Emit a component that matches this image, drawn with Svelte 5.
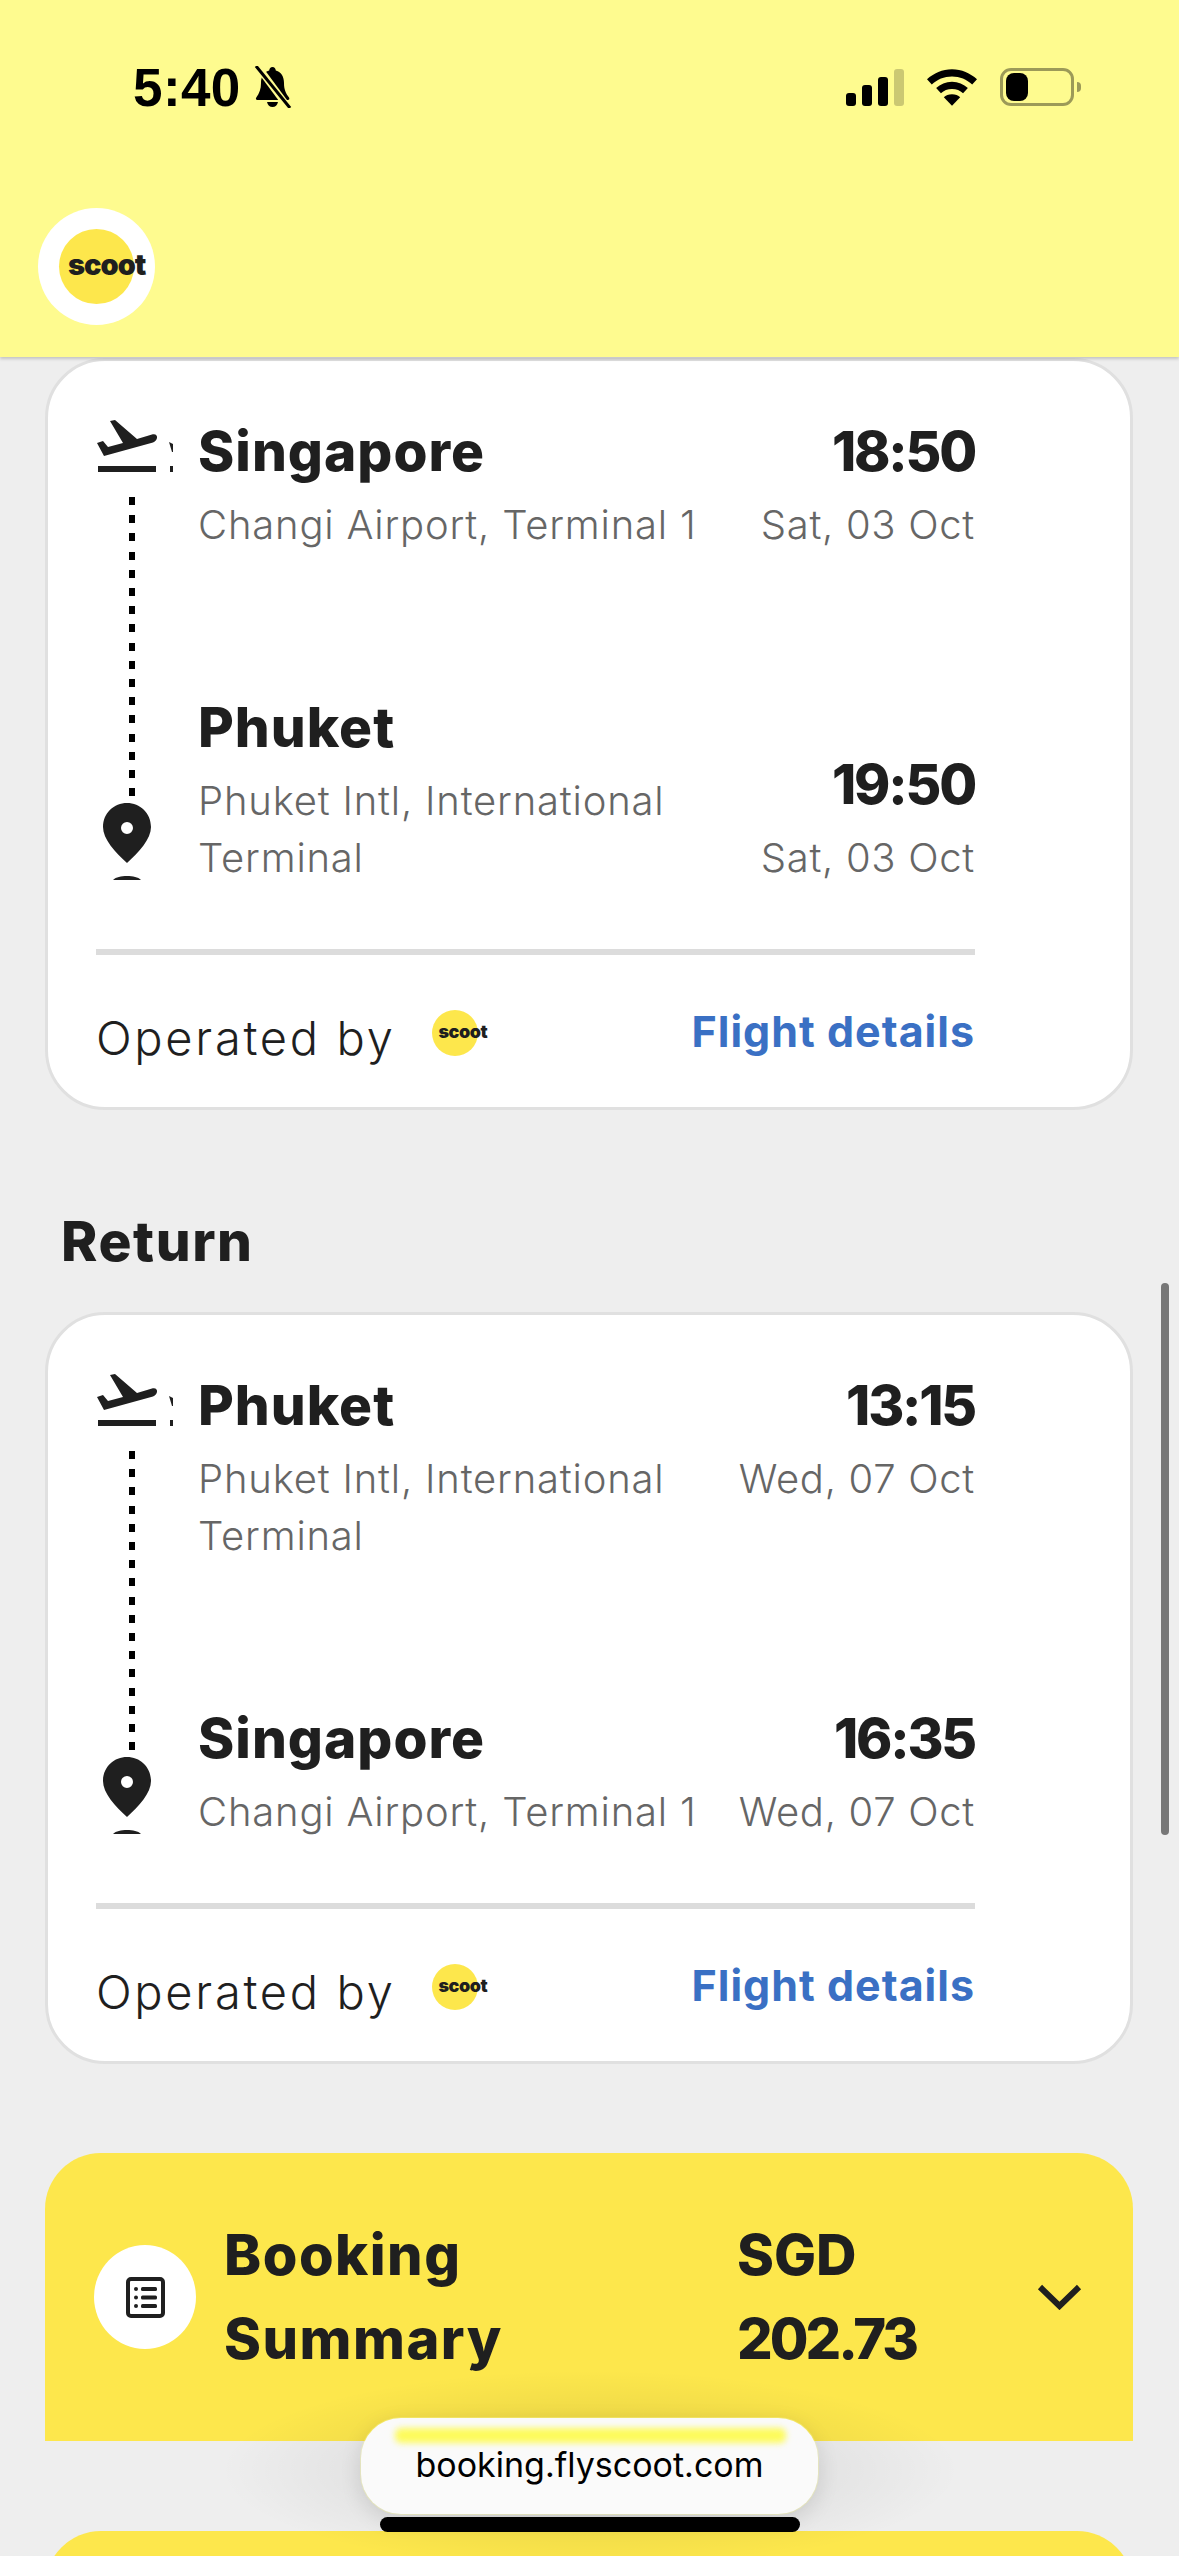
<script lang="ts">
  interface Stop {
    city: string;
    airport: string;
    time: string;
    date: string;
  }

  interface Leg {
    title?: string;
    from: Stop;
    to: Stop;
  }

  const legs: Leg[] = [
    {
      from: { city: "Singapore", airport: "Changi Airport, Terminal 1", time: "18:50", date: "Sat, 03 Oct" },
      to: { city: "Phuket", airport: "Phuket Intl, International Terminal", time: "19:50", date: "Sat, 03 Oct" },
    },
    {
      title: "Return",
      from: { city: "Phuket", airport: "Phuket Intl, International Terminal", time: "13:15", date: "Wed, 07 Oct" },
      to: { city: "Singapore", airport: "Changi Airport, Terminal 1", time: "16:35", date: "Wed, 07 Oct" },
    },
  ];
</script>

<div class="page">
  <header class="topbar">
    <div class="status">
      <div class="clock">
        <span>5:40</span>
        <svg class="bell" viewBox="0 0 39 42" aria-hidden="true">
          <path d="M19.500 1c2 0 3 1.500 3.300 3.500C28.500 6 31 11 31 17c0 6 1.500 10 5 14.500.8 1.200.2 2.500-1.200 2.500H4.500c-1.500 0-2.100-1.300-1.200-2.500C6.500 27 8 23 8 17c0-6 2.500-11 8.200-12.500C16.500 2.500 17.500 1 19.500 1z" fill="#000" />
          <path d="M14 36h11c-.5 3-2.800 5-5.500 5s-5-2-5.500-5z" fill="#000" />
          <path d="M3 -2l34 46" stroke="#fefb8f" stroke-width="7" />
          <path d="M3 0l34 42" stroke="#000" stroke-width="3" />
        </svg>
      </div>
      <div class="indicators">
        <svg class="signal" viewBox="0 0 58 37" aria-hidden="true">
          <rect x="0" y="24" width="10" height="13" rx="3" fill="#000" />
          <rect x="16" y="16" width="10" height="21" rx="3" fill="#000" />
          <rect x="32" y="8" width="10" height="29" rx="3" fill="#000" />
          <rect x="48" y="0" width="10" height="37" rx="3" fill="#000" opacity="0.2" />
        </svg>
        <svg class="wifi" viewBox="0 0 52 38" aria-hidden="true">
          <path d="M26 0C16 0 7 4 0 10.500l5 5.500C10.500 10.500 18 7.500 26 7.500S41.500 10.500 47 16l5-5.500C45 4 36 0 26 0z" fill="#000" />
          <path d="M26 13c-6.500 0-12 2.500-16.500 6.500l5 5.500c3-3 7-4.500 11.500-4.500s8.500 1.500 11.500 4.500l5-5.500C38 15.500 32.500 13 26 13z" fill="#000" />
          <path d="M26 26c-3.500 0-6.500 1.200-8.500 3.200L26 38l8.500-8.800C32.500 27.200 29.500 26 26 26z" fill="#000" />
        </svg>
        <div class="battery">
          <div class="battery-body"><div class="battery-fill"></div></div>
          <div class="battery-cap"></div>
        </div>
      </div>
    </div>
    <div class="logo-ring">
      <div class="logo-disc"><span class="logo-word">scoot</span></div>
    </div>
  </header>

  <main class="content">
    {#each legs as leg}
      {#if leg.title}
        <h2 class="leg-title">{leg.title}</h2>
      {/if}
      <section class="card">
        <div class="route">
          <div class="rail">
            <div class="rail-top">
              <svg class="plane" viewBox="0 0 60 52" aria-hidden="true">
                <path d="M0 23l6-2 5 6 15-4L13 1l5-1 22 19 15-4.500c4-1 5.500 1.500 5 3.500-.5 2-2 3.500-4 4.500L7 36z" fill="#1f1f1f" />
                <rect x="1" y="46" width="58" height="6" fill="#1f1f1f" />
              </svg>
              <svg class="plane-clip" viewBox="0 0 4 30" aria-hidden="true">
                <path d="M0 0l4 2v8H3zM1 24h3v6H1z" fill="#1f1f1f" />
              </svg>
            </div>
            <div class="dots"></div>
            <svg class="pin" viewBox="0 0 48 77" aria-hidden="true">
              <path fill-rule="evenodd" d="M24 0C11 0 0 10 0 24c0 12 12 25 24 36 12-11 24-24 24-36C48 10 37 0 24 0zm0 19a6 6 0 1 1 0 12 6 6 0 0 1 0-12z" fill="#1f1f1f" />
              <path d="M10 77c3-3 8-4 14-4s11 1 14 4z" fill="#1f1f1f" />
            </svg>
          </div>
          <div class="stops">
            {#each [leg.from, leg.to] as stop, i}
              <div class="stop" class:stop-end={i === 1}>
                <div class="stop-place">
                  <div class="city">{stop.city}</div>
                  <div class="airport">{stop.airport}</div>
                </div>
                <div class="stop-time">
                  <div class="time">{stop.time}</div>
                  <div class="date">{stop.date}</div>
                </div>
              </div>
            {/each}
          </div>
        </div>
        <div class="card-foot">
          <div class="operated">
            <span class="operated-label">Operated by</span>
            <div class="mini-logo"><span>scoot</span></div>
          </div>
          <span class="details">Flight details</span>
        </div>
      </section>
    {/each}

    <section class="summary">
      <div class="summary-icon">
        <svg viewBox="0 0 39 41" aria-hidden="true">
          <rect x="2" y="2" width="35" height="37" rx="3" fill="none" stroke="#1f1f1f" stroke-width="4" />
          <circle cx="10" cy="12" r="2" fill="#1f1f1f" />
          <circle cx="10" cy="20.500" r="2" fill="#1f1f1f" />
          <circle cx="10" cy="29" r="2" fill="#1f1f1f" />
          <rect x="15" y="10" width="16" height="4" rx="1.500" fill="#1f1f1f" />
          <rect x="15" y="18.500" width="16" height="4" rx="1.500" fill="#1f1f1f" />
          <rect x="15" y="27" width="16" height="4" rx="1.500" fill="#1f1f1f" />
        </svg>
      </div>
      <div class="summary-title">Booking<br />Summary</div>
      <div class="summary-price">SGD<br /><span class="amount">202.73</span></div>
      <svg class="chevron" viewBox="0 0 45 26" aria-hidden="true">
        <path d="M3 3l19.500 19L42 3" fill="none" stroke="#1f1f1f" stroke-width="6" />
      </svg>
    </section>
    <div class="summary-next"></div>
  </main>

  <div class="scrollbar"></div>

  <div class="url-shade"></div>
  <div class="url-pill">
    <div class="url-glow"></div>
    <span>booking.flyscoot.com</span>
  </div>
  <div class="home-bar"></div>
</div>

<style>
  :global(body) {
    margin: 0;
    background: #eeeeee;
  }

  .page {
    position: relative;
    width: 1179px;
    height: 2556px;
    overflow: hidden;
    background: #eeeeee;
    font-family: Inter, "Liberation Sans", sans-serif;
    color: #1f1f1f;
  }

  /* Header */
  .topbar {
    position: relative;
    z-index: 2;
    height: 357px;
    box-sizing: border-box;
    background: #fefb8f;
    box-shadow: 0 2px 3px rgba(0, 0, 0, 0.18);
  }

  .status {
    display: flex;
    justify-content: space-between;
    align-items: center;
    height: 50px;
    padding: 62px 98px 0 133px;
  }

  .clock {
    display: flex;
    align-items: center;
    gap: 12px;
    font-family: "Liberation Sans", sans-serif;
    font-size: 53px;
    font-weight: 700;
    letter-spacing: 0.4px;
    color: #000;
  }

  .bell {
    width: 39px;
    height: 42px;
    overflow: hidden;
  }

  .indicators {
    display: flex;
    align-items: center;
    gap: 23px;
  }

  .signal {
    width: 58px;
    height: 37px;
  }

  .wifi {
    width: 50px;
    height: 37px;
  }

  .battery {
    display: flex;
    align-items: center;
    gap: 3px;
  }

  .battery-body {
    width: 74px;
    height: 38px;
    box-sizing: border-box;
    border: 3px solid #9c9a58;
    border-radius: 11px;
    padding: 2px 3px;
  }

  .battery-fill {
    width: 22px;
    height: 100%;
    background: #000;
    border-radius: 8px;
  }

  .battery-cap {
    width: 4px;
    height: 10px;
    background: #9c9a58;
    border-radius: 0 4px 4px 0;
  }

  .logo-ring {
    display: flex;
    align-items: center;
    justify-content: center;
    width: 117px;
    height: 117px;
    margin: 96px 0 0 38px;
    border-radius: 50%;
    background: #fff;
  }

  .logo-disc {
    position: relative;
    width: 75px;
    height: 75px;
    border-radius: 50%;
    background: #fde74c;
  }

  .logo-word {
    position: absolute;
    left: 9px;
    top: 21px;
    font-weight: 900;
    font-size: 29px;
    line-height: 30px;
    letter-spacing: -1px;
    color: #1f1f1f;
  }

  /* Flight cards */
  .content {
    padding: 1px 46px 0 45px;
  }

  .leg-title {
    margin: 101px 0 41px 16px;
    font-size: 55px;
    line-height: 60px;
    font-weight: 800;
    letter-spacing: 1.6px;
  }

  .card {
    box-sizing: border-box;
    height: 752px;
    padding: 0 155px 0 48px;
    background: #fff;
    border: 3px solid #e0e0e0;
    border-radius: 60px;
    display: flex;
    flex-direction: column;
  }

  .route {
    display: flex;
    height: 594px;
    flex: none;
    box-sizing: border-box;
    border-bottom: 6px solid #dcdcdc;
    padding-top: 60px;
  }

  .rail {
    width: 102px;
    margin-top: -1px;
    flex: none;
  }

  .rail-top {
    display: flex;
    align-items: flex-end;
    gap: 12px;
    height: 52px;
    padding-left: 1px;
  }

  .plane {
    width: 60px;
    height: 52px;
    overflow: visible;
  }

  .plane-clip {
    width: 4px;
    height: 30px;
  }

  .dots {
    width: 6px;
    height: 301px;
    margin: 25px 0 0 33px;
    background: repeating-linear-gradient(#000 0 8px, transparent 8px 18.2px);
  }

  .pin {
    display: block;
    width: 48px;
    height: 77px;
    margin: 5px 0 0 7px;
  }

  .stops {
    flex: 1;
    min-width: 0;
    height: 465px;
    display: flex;
    flex-direction: column;
    justify-content: space-between;
  }

  .stop {
    display: flex;
    justify-content: space-between;
    gap: 20px;
  }

  .stop-end {
    align-items: flex-end;
  }

  .stop-place {
    width: 520px;
  }

  .city {
    font-size: 55px;
    line-height: 60px;
    font-weight: 800;
    letter-spacing: 1px;
  }

  .airport {
    margin-top: 15px;
    font-size: 40px;
    line-height: 57px;
    font-weight: 300;
    letter-spacing: 0.8px;
    color: #666666;
  }

  .stop-time {
    text-align: right;
    white-space: nowrap;
  }

  .time {
    font-size: 55px;
    line-height: 60px;
    font-weight: 800;
    letter-spacing: -2.2px;
  }

  .date {
    margin-top: 15px;
    font-size: 40px;
    line-height: 57px;
    font-weight: 300;
    letter-spacing: 0.7px;
    color: #666666;
  }

  .card-foot {
    flex: 1;
    display: flex;
    justify-content: space-between;
    align-items: center;
  }

  .operated {
    display: flex;
    align-items: center;
    gap: 36px;
    font-size: 47px;
    font-weight: 300;
    letter-spacing: 2.7px;
  }

  .operated-label {
    margin-top: 12px;
  }

  .mini-logo {
    position: relative;
    width: 46px;
    height: 46px;
    margin-top: 4px;
    border-radius: 50%;
    background: #fde74c;
    letter-spacing: -0.5px;
  }

  .mini-logo span {
    position: absolute;
    left: 7px;
    top: 12px;
    font-size: 18px;
    line-height: 20px;
    font-weight: 900;
  }

  .details {
    margin-top: -1px;
    font-size: 43px;
    font-weight: 700;
    letter-spacing: 1px;
    color: #3a70c4;
  }

  /* Booking summary */
  .summary {
    position: relative;
    display: flex;
    align-items: center;
    height: 288px;
    box-sizing: border-box;
    margin-top: 89px;
    padding: 0 51px 0 49px;
    background: #fde74c;
    border-radius: 56px 56px 0 0;
  }

  .summary-icon {
    display: flex;
    align-items: center;
    justify-content: center;
    width: 102px;
    height: 104px;
    flex: none;
    border-radius: 50%;
    background: #fff;
  }

  .summary-icon svg {
    width: 39px;
    height: 41px;
  }

  .summary-title,
  .summary-price {
    font-size: 56px;
    line-height: 84px;
    font-weight: 800;
  }

  .summary-title {
    width: 513px;
    margin-left: 28px;
    letter-spacing: 1.5px;
  }

  .summary-price {
    flex: 1;
  }

  .amount {
    letter-spacing: -3px;
  }

  .chevron {
    width: 45px;
    height: 26px;
  }

  .summary-next {
    height: 100px;
    margin-top: 90px;
    background: #fde74c;
    border-radius: 56px 56px 0 0;
  }

  /* Browser overlays */
  .scrollbar {
    position: absolute;
    top: 1283px;
    right: 10px;
    width: 8px;
    height: 552px;
    border-radius: 4px;
    background: #777777;
  }

  .url-shade {
    position: absolute;
    left: 220px;
    top: 2370px;
    width: 740px;
    height: 200px;
    background: radial-gradient(closest-side, rgba(0, 0, 0, 0.12), rgba(0, 0, 0, 0));
  }

  .url-pill {
    position: absolute;
    left: 361px;
    top: 2418px;
    width: 457px;
    height: 96px;
    box-sizing: border-box;
    border-radius: 40px;
    background: #fafafa;
    box-shadow: 0 0 0 1px rgba(253, 251, 150, 0.35), 0 6px 22px rgba(0, 0, 0, 0.12);
    display: flex;
    justify-content: center;
    padding-top: 25px;
    font-size: 34px;
    line-height: 44px;
    color: #000;
  }

  .url-glow {
    position: absolute;
    left: 34px;
    right: 32px;
    top: 10px;
    height: 15px;
    background: #fdfb5c;
    filter: blur(3px);
    border-radius: 6px;
  }

  .home-bar {
    position: absolute;
    left: 380px;
    top: 2517px;
    width: 420px;
    height: 15px;
    border-radius: 8px;
    background: #000;
  }
</style>
